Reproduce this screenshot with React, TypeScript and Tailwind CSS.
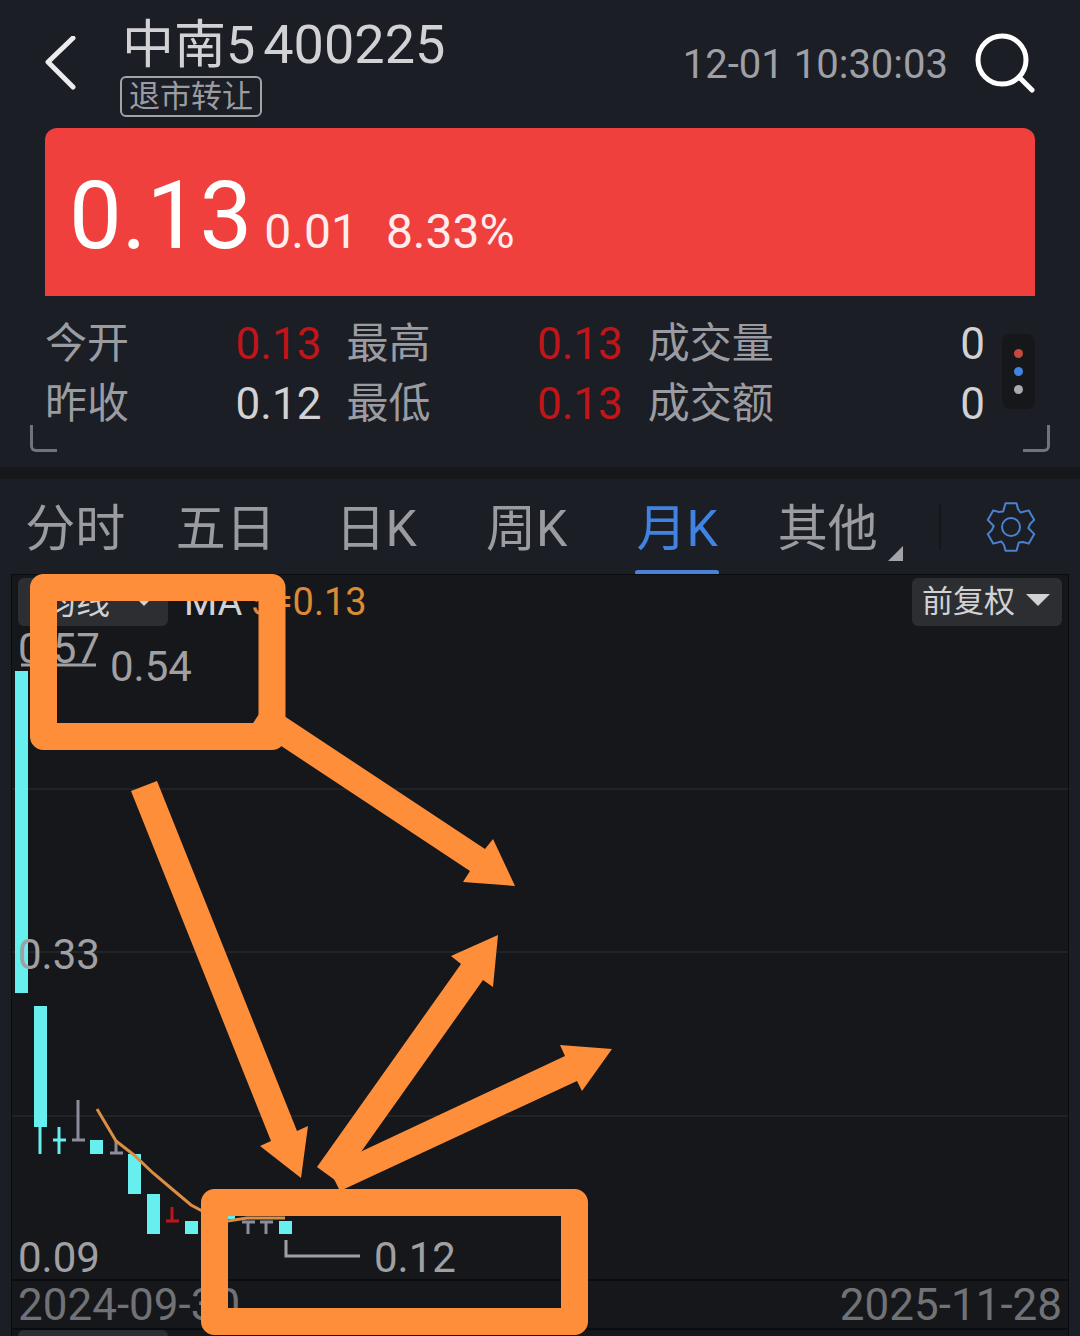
import { useState } from "react";

const TABS = ["分时", "五日", "日K", "周K", "月K", "其他"];

const STATS = [
  [
    { label: "今开", value: "0.13", up: true },
    { label: "最高", value: "0.13", up: true },
    { label: "成交量", value: "0", up: false },
  ],
  [
    { label: "昨收", value: "0.12", up: false },
    { label: "最低", value: "0.13", up: true },
    { label: "成交额", value: "0", up: false },
  ],
];

const CYAN = "#66efee";
const GREY = "#8b8c9c";
const RED = "#c01519";
const MARKER = "#ff8e3a";

const BODIES = [
  { x: 15, top: 671, bottom: 993 },
  { x: 34, top: 1006, bottom: 1127 },
  { x: 90, top: 1140, bottom: 1154 },
  { x: 128, top: 1154, bottom: 1194 },
  { x: 147, top: 1194, bottom: 1234 },
  { x: 185, top: 1221, bottom: 1234 },
  { x: 222, top: 1208, bottom: 1219 },
  { x: 279, top: 1221, bottom: 1234 },
];

// wick plus an open/close tick
const DOJIS = [
  { x: 59, top: 1127, bottom: 1154, tick: 1140, color: CYAN },
  { x: 78, top: 1100, bottom: 1140, tick: 1140, color: GREY },
  { x: 116, top: 1140, bottom: 1154, tick: 1153, color: GREY },
  { x: 172, top: 1207, bottom: 1221, tick: 1221, color: RED },
  { x: 248, top: 1221, bottom: 1234, tick: 1222, color: GREY },
  { x: 266, top: 1221, bottom: 1234, tick: 1222, color: GREY },
];

const GRID_LINES = [789, 952, 1116];

const ARROWS = [
  "266,704 485,849 493,839 515,886 463,882 470,871 251,726",
  "131,791 157,781 297,1131 308,1126 301,1178 260,1146 271,1141",
  "317,1167 461,964 451,956 498,935 493,987 483,980 339,1183",
  "328,1167 565,1056 560,1045 612,1049 582,1091 577,1081 340,1191",
];

// one tooth pointing up, repeated every 60 degrees
const TOOTH = [
  [-5.5, -23.7],
  [5.5, -23.7],
  [7, -18],
  [9.5, -14.5],
];
const GEAR_POINTS = [0, 1, 2, 3, 4, 5]
  .flatMap((i) => {
    const a = (i * Math.PI) / 3;
    return TOOTH.map(
      ([x, y]) => `${x * Math.cos(a) - y * Math.sin(a)},${x * Math.sin(a) + y * Math.cos(a)}`,
    );
  })
  .join(" ");

function Header() {
  return (
    <header className="flex h-32 items-start justify-between px-11">
      <div className="flex">
        <button type="button" aria-label="返回" className="mt-9 mr-11 h-14 w-8">
          <svg viewBox="0 0 32 56" className="h-14 w-8" fill="none" stroke="#ececee" strokeWidth="5" strokeLinecap="round" strokeLinejoin="round">
            <path d="M29 2 L4 26 L29 51" />
          </svg>
        </button>
        <div className="pt-3">
          <h1 className="flex h-16 items-baseline gap-2 text-[#d2d2d4]">
            <span className="ml-[2px] text-[52px] leading-[66px]">中南5</span>
            <span className="text-[54px] leading-[66px]">400225</span>
          </h1>
          <span className="flex h-[41px] w-fit items-center rounded-md border-2 border-[#a3a4a9] px-[7px] text-[31px] leading-9 text-[#9b9ca1]">
            退市转让
          </span>
        </div>
      </div>
      <div className="flex items-center gap-6 pt-8">
        <time className="text-[40px] leading-[66px] text-[#9fa0a5]">12-01 10:30:03</time>
        <button type="button" aria-label="搜索" className="h-16 w-16">
          <svg viewBox="0 0 64 64" className="h-16 w-16" fill="none" stroke="#fff" strokeWidth="5" strokeLinecap="round">
            <circle cx="30" cy="27" r="24" />
            <path d="M47 44 L60 57" />
          </svg>
        </button>
      </div>
    </header>
  );
}

function QuoteCard() {
  return (
    <section className="mx-[45px] flex h-42 items-baseline rounded-t-xl bg-[#ef403d] pl-6 text-white">
      <span className="text-[94px] leading-[176px]">0.13</span>
      <span className="ml-3 text-[48px] text-[#ffecec]">0.01</span>
      <span className="ml-7 text-[48px] text-[#ffecec]">8.33%</span>
    </section>
  );
}

function Stats() {
  return (
    <section className="relative flex h-[171px] items-start px-[45px] pt-[18px]">
      <table className="flex-1 table-fixed">
        <tbody>
          {STATS.map((row) => (
            <tr key={row[0].label} className="flex h-15">
              {row.map((cell) => (
                <td key={cell.label} className="mr-[25px] flex flex-1 items-center justify-between last:mr-[17px] last:flex-[1.22]">
                  <span className="text-[42px] leading-[62px] text-[#9b9ca1]">{cell.label}</span>
                  <span className={`text-[44px] leading-15 ${cell.up ? "text-[#c01519]" : "text-[#d2d2d4]"}`}>
                    {cell.value}
                  </span>
                </td>
              ))}
            </tr>
          ))}
        </tbody>
      </table>
      <button
        type="button"
        aria-label="更多"
        className="mt-5 flex h-[75px] w-[33px] flex-col items-center justify-center gap-[9px] rounded-lg bg-[#16171b]"
      >
        <span className="size-[9px] rounded-full bg-[#c44a3c]" />
        <span className="size-[9px] rounded-full bg-[#4083e2]" />
        <span className="size-[9px] rounded-full bg-[#a9a9b2]" />
      </button>
      <span className="absolute bottom-[15px] left-[30px] size-[27px] rounded-bl-md border-b-3 border-l-3 border-[#71727a]" />
      <span className="absolute bottom-[15px] right-[30px] size-[27px] rounded-br-md border-b-3 border-r-3 border-[#71727a]" />
    </section>
  );
}

function PeriodTabs() {
  const [active, setActive] = useState("月K");

  return (
    <nav className="flex h-24 items-stretch">
      <div className="grid flex-1 grid-cols-6">
        {TABS.map((tab) => (
          <button
            key={tab}
            type="button"
            onClick={() => setActive(tab)}
            className={`relative flex justify-center pt-3 text-[50px] leading-[76px] ${
              tab === active ? "text-[#4083e2]" : "text-[#9b9ca1]"
            }`}
          >
            {tab}
            {tab === active && <span className="absolute bottom-0 h-[5px] w-[84px] rounded-sm bg-[#4a82d8]" />}
            {tab === "其他" && (
              <svg viewBox="0 0 15 15" className="absolute bottom-[14px] right-0 size-[15px]" fill="#a3a4a9">
                <path d="M15 0 V15 H0 Z" />
              </svg>
            )}
          </button>
        ))}
      </div>
      <div className="flex w-[177px] items-center pl-9">
        <span className="h-[46px] w-[2px] bg-[#16171c]" />
        <button type="button" aria-label="设置" className="ml-11 size-[52px]">
          <svg viewBox="-26 -26 52 52" className="size-[52px]" fill="none" stroke="#4a82d0" strokeWidth="2" strokeLinejoin="round">
            <polygon points={GEAR_POINTS} />
            <circle r="9" />
          </svg>
        </button>
      </div>
    </nav>
  );
}

function Dropdown({ label, options, className }: { label: string; options: string[]; className: string }) {
  return (
    <div className="relative">
      <select
        aria-label={label}
        className={`block h-12 w-[150px] appearance-none rounded-md bg-[#2d2e32] leading-12 text-[#d2d2d4] outline-none ${className}`}
      >
        {options.map((option) => (
          <option key={option}>{option}</option>
        ))}
      </select>
      <svg viewBox="0 0 24 12" className="pointer-events-none absolute right-3 top-4 h-3 w-6" fill="#d2d2d4">
        <path d="M0 0 H24 L12 12 Z" />
      </svg>
    </div>
  );
}

function CandleChart() {
  return (
    <svg viewBox="12 575 1056 704" className="block w-full overflow-visible">
      {GRID_LINES.map((y) => (
        <line key={y} x1="12" x2="1068" y1={y} y2={y} stroke="#222327" strokeWidth="2" />
      ))}
      {BODIES.map((body) => (
        <rect key={body.x} x={body.x} y={body.top} width="13" height={body.bottom - body.top} fill={CYAN} />
      ))}
      <line x1="40" x2="40" y1="1127" y2="1154" stroke={CYAN} strokeWidth="3" />
      {DOJIS.map((doji) => (
        <path
          key={doji.x}
          d={`M${doji.x} ${doji.top} V${doji.bottom} M${doji.x - 6} ${doji.tick} h13`}
          stroke={doji.color}
          strokeWidth="3"
        />
      ))}
      <polyline
        points="97,1109 116,1141 134,1155 153,1173 172,1189 191,1205 210,1215 228,1221 247,1218 285,1218"
        fill="none"
        stroke="#dc8f42"
        strokeWidth="3"
      />
      <path d="M286 1240 V1256 H360" fill="none" stroke="#a0a0a3" strokeWidth="3" />
      <g fill="#a0a0a3" fontSize="42">
        <text x="18" y="663">0.57</text>
        <line x1="21" x2="96" y1="665" y2="665" stroke="#a0a0a3" strokeWidth="3" />
        <text x="110" y="681">0.54</text>
        <text x="18" y="969">0.33</text>
        <text x="18" y="1272">0.09</text>
        <text x="374" y="1272">0.12</text>
      </g>
    </svg>
  );
}

function Annotations() {
  return (
    <svg viewBox="0 575 1080 761" className="pointer-events-none absolute left-0 top-0 w-full overflow-visible">
      <g fill="none" stroke={MARKER} strokeWidth="27" strokeLinejoin="round">
        <rect x="43.5" y="587.5" width="228.5" height="149" />
        <rect x="214.5" y="1202.5" width="360" height="119" />
      </g>
      {ARROWS.map((points) => (
        <polygon key={points} points={points} fill={MARKER} />
      ))}
    </svg>
  );
}

export default function App() {
  return (
    <main className="min-h-screen overflow-hidden bg-[#1c1e26] font-['Roboto','Noto_Sans_CJK_SC',sans-serif]">
      <Header />
      <QuoteCard />
      <Stats />
      <div className="h-3 bg-[#16171b]" />
      <PeriodTabs />
      <div className="relative">
        <section className="mx-3 bg-[#16171b] outline-1 outline-[#0b0c0f]">
          <div className="relative">
            <CandleChart />
            <div className="absolute inset-x-[6px] top-[3px] flex items-start">
              <Dropdown label="指标" options={["均线"]} className="pl-6 text-[34px]" />
              <span className="ml-4 text-[38px] leading-12 text-[#d2d2d4]">MA</span>
              <span className="ml-2 flex-1 text-[38px] leading-12 text-[#dd8a35]">5=0.13</span>
              <Dropdown label="复权" options={["前复权"]} className="pl-[10px] text-[31px]" />
            </div>
          </div>
          <div className="flex h-[51px] items-center justify-between border-y-2 border-[#0b0c0f] px-[6px] text-[44px] leading-12 text-[#717276]">
            <span>2024-09-30</span>
            <span>2025-11-28</span>
          </div>
          <div className="h-[6px] overflow-hidden px-[6px]">
            <div className="h-12 w-[150px] rounded-md bg-[#2d2e32]" />
          </div>
        </section>
        <Annotations />
      </div>
    </main>
  );
}
